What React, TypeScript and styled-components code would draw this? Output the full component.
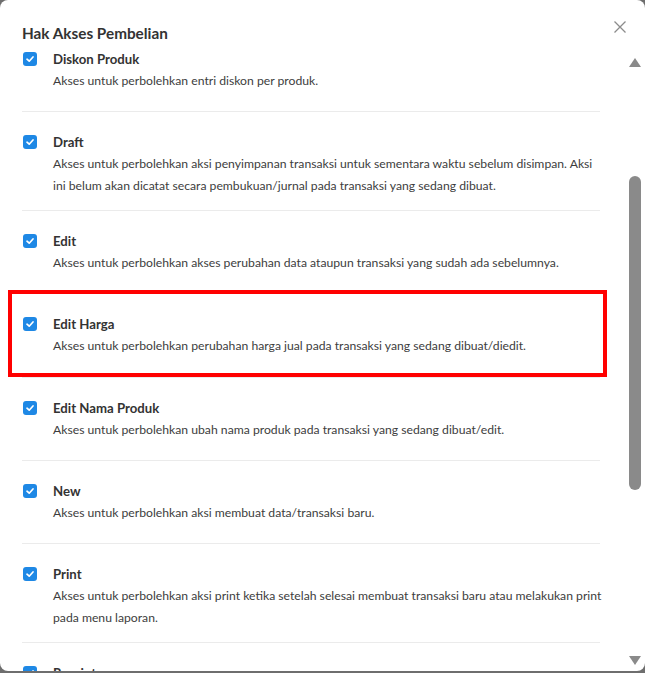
import React from "react";
import styled, { createGlobalStyle } from "styled-components";

const Global = createGlobalStyle`
  html, body { margin: 0; padding: 0; background: #6e6e6e; }
  body { font-family: Lato, "Noto Sans", sans-serif; }
  #root { height: 673px; }
`;

const Dialog = styled.div`
  width: 645px;
  height: 671px;
  background: #fff;
  border-radius: 8px;
  display: flex;
  flex-direction: column;
  overflow: hidden;
`;

const Header = styled.div`
  height: 52px;
  flex: none;
  display: flex;
  align-items: flex-start;
  justify-content: space-between;
  padding: 0 19px 0 22px;
  box-sizing: border-box;
`;

const Title = styled.h2`
  margin: 24px 0 0;
  font-size: 15.3px;
  line-height: 18px;
  font-weight: 700;
  color: #333;
`;

const CloseButton = styled.button`
  margin-top: 21px;
  width: 12px;
  height: 12px;
  padding: 0;
  border: none;
  background: none;
  display: flex;
  cursor: pointer;
`;

const Body = styled.div`
  flex: 1;
  min-height: 0;
  display: flex;
`;

const Viewport = styled.div`
  flex: 1;
  overflow: hidden;
  padding: 0 29px 0 22px;
`;

const ScrollContent = styled.div<{ $offset: number }>`
  margin-top: ${(p) => -p.$offset}px;
`;

const Item = styled.div`
  position: relative;
  padding: 22px 0 13px;
  border-bottom: 1px solid #ebebeb;
`;

const Highlight = styled.div`
  position: absolute;
  top: -4px;
  left: -14px;
  right: -7px;
  bottom: 0;
  border: 4px solid #ff0000;
  pointer-events: none;
`;

const TitleRow = styled.label`
  display: flex;
  align-items: center;
  gap: 16px;
  height: 16px;
  font-size: 13.2px;
  font-weight: 700;
  color: #333;
`;

const Check = styled.span`
  width: 14px;
  height: 14px;
  margin-left: 1px;
  border-radius: 3px;
  background: #1e88e5;
  display: flex;
  align-items: center;
  justify-content: center;
  flex: none;
`;

const Description = styled.p`
  margin: 3px -5px 0 31px;
  min-height: 28.4px;
  font-size: 12.2px;
  line-height: 22px;
  color: #3d3d3d;
`;

const Scrollbar = styled.div`
  width: 16px;
  flex: none;
  display: flex;
  flex-direction: column;
  align-items: flex-start;
  padding: 6px 0;
  box-sizing: border-box;
`;

const Arrow = styled.div<{ $down?: boolean }>`
  width: 0;
  height: 0;
  border-left: 6px solid transparent;
  border-right: 6px solid transparent;
  ${(p) =>
    p.$down
      ? "border-top: 9px solid #8a8a8a;"
      : "border-bottom: 9px solid #8a8a8a;"}
`;

const Track = styled.div`
  flex: 1;
  width: 12px;
`;

const Thumb = styled.div<{ $top: number; $height: number }>`
  margin-top: ${(p) => p.$top}px;
  height: ${(p) => p.$height}px;
  width: 12px;
  border-radius: 6px;
  background: #8a8a8a;
`;

const CheckIcon = () => (
  <svg width="10" height="10" viewBox="0 0 10 10">
    <path d="M2 5.2 L4.2 7.2 L8 3" fill="none" stroke="#fff" strokeWidth="1.7" strokeLinecap="round" strokeLinejoin="round" />
  </svg>
);

const CloseIcon = () => (
  <svg width="12" height="12" viewBox="0 0 12 12">
    <path d="M0.5 0.5 L11.5 11.5 M11.5 0.5 L0.5 11.5" stroke="#8c8c8c" strokeWidth="1.3" />
  </svg>
);

const items = [
  { title: "Diskon Produk", desc: "Akses untuk perbolehkan entri diskon per produk." },
  {
    title: "Draft",
    desc: "Akses untuk perbolehkan aksi penyimpanan transaksi untuk sementara waktu sebelum disimpan. Aksi ini belum akan dicatat secara pembukuan/jurnal pada transaksi yang sedang dibuat.",
  },
  { title: "Edit", desc: "Akses untuk perbolehkan akses perubahan data ataupun transaksi yang sudah ada sebelumnya." },
  { title: "Edit Harga", desc: "Akses untuk perbolehkan perubahan harga jual pada transaksi yang sedang dibuat/diedit.", highlight: true },
  { title: "Edit Nama Produk", desc: "Akses untuk perbolehkan ubah nama produk pada transaksi yang sedang dibuat/edit." },
  { title: "New", desc: "Akses untuk perbolehkan aksi membuat data/transaksi baru." },
  {
    title: "Print",
    desc: "Akses untuk perbolehkan aksi print ketika setelah selesai membuat transaksi baru atau melakukan print pada menu laporan.",
  },
  { title: "Reprint", desc: "Akses untuk perbolehkan aksi cetak ulang transaksi yang sudah dibuat." },
];

export default function App() {
  return (
    <>
      <Global />
      <Dialog>
        <Header>
          <Title>Hak Akses Pembelian</Title>
          <CloseButton aria-label="Tutup">
            <CloseIcon />
          </CloseButton>
        </Header>
        <Body>
          <Viewport>
            <ScrollContent $offset={23.5}>
              {items.map((it) => (
                <Item key={it.title}>
                  {it.highlight && <Highlight />}
                  <TitleRow>
                    <Check>
                      <CheckIcon />
                    </Check>
                    {it.title}
                  </TitleRow>
                  <Description>{it.desc}</Description>
                </Item>
              ))}
            </ScrollContent>
          </Viewport>
          <Scrollbar>
            <Arrow />
            <Track>
              <Thumb $top={109} $height={314} />
            </Track>
            <Arrow $down />
          </Scrollbar>
        </Body>
      </Dialog>
    </>
  );
}
